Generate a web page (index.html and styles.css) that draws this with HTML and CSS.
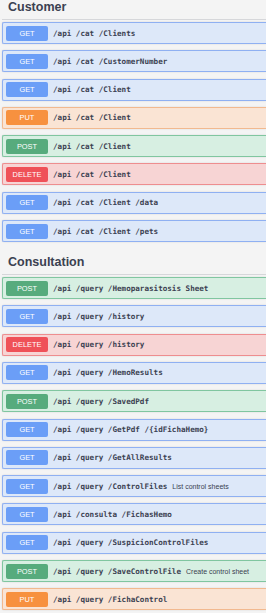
FILE: index.html
```html
<!DOCTYPE html>
<html lang="en">
<head>
    <meta charset="UTF-8">
    <meta name="viewport" content="width=device-width, initial-scale=1.0">
    <title>API</title>
    <link rel="stylesheet" href="styles.css">
</head>
<body>
    <div class="container">
        <div class="tag-section">
            <h3 class="tag-title">Customer</h3>
            <div class="op op-get"><span class="method">GET</span><span class="path">/api /cat /Clients</span></div>
            <div class="op op-get"><span class="method">GET</span><span class="path">/api /cat /CustomerNumber</span></div>
            <div class="op op-get"><span class="method">GET</span><span class="path">/api /cat /Client</span></div>
            <div class="op op-put"><span class="method">PUT</span><span class="path">/api /cat /Client</span></div>
            <div class="op op-post"><span class="method">POST</span><span class="path">/api /cat /Client</span></div>
            <div class="op op-delete"><span class="method">DELETE</span><span class="path">/api /cat /Client</span></div>
            <div class="op op-get"><span class="method">GET</span><span class="path">/api /cat /Client /data</span></div>
            <div class="op op-get"><span class="method">GET</span><span class="path">/api /cat /Client /pets</span></div>
        </div>

        <div class="tag-section">
            <h3 class="tag-title">Consultation</h3>
            <div class="op op-post"><span class="method">POST</span><span class="path">/api /query /Hemoparasitosis Sheet</span></div>
            <div class="op op-get"><span class="method">GET</span><span class="path">/api /query /history</span></div>
            <div class="op op-delete"><span class="method">DELETE</span><span class="path">/api /query /history</span></div>
            <div class="op op-get"><span class="method">GET</span><span class="path">/api /query /HemoResults</span></div>
            <div class="op op-post"><span class="method">POST</span><span class="path">/api /query /SavedPdf</span></div>
            <div class="op op-get"><span class="method">GET</span><span class="path">/api /query /GetPdf /{idFichaHemo}</span></div>
            <div class="op op-get"><span class="method">GET</span><span class="path">/api /query /GetAllResults</span></div>
            <div class="op op-get"><span class="method">GET</span><span class="path">/api /query /ControlFiles</span><span class="desc">List control sheets</span></div>
            <div class="op op-get"><span class="method">GET</span><span class="path">/api /consulta /FichasHemo</span></div>
            <div class="op op-get"><span class="method">GET</span><span class="path">/api /query /SuspicionControlFiles</span></div>
            <div class="op op-post"><span class="method">POST</span><span class="path">/api /query /SaveControlFile</span><span class="desc">Create control sheet</span></div>
            <div class="op op-put"><span class="method">PUT</span><span class="path">/api /query /FichaControl</span></div>
        </div>
    </div>
</body>
</html>
```

FILE: styles.css
```css
body {
    margin: 0;
    background-color: #f4f4f4;
    font-family: "Liberation Sans", Arial, sans-serif;
    color: #3b4151;
    overflow: hidden;
}

.container {
    padding-left: 2px;
}

.tag-title {
    margin: 0 0 2px 0;
    padding: 0 0 4px 6px;
    font-size: 12.5px;
    line-height: 15px;
    font-weight: bold;
    color: #3b4151;
    border-bottom: 1px solid #d6d7da;
}

.tag-section + .tag-section .tag-title {
    margin-top: 13px;
}

.op {
    display: flex;
    align-items: center;
    box-sizing: border-box;
    height: 22px;
    margin-bottom: 6.3px;
    padding-left: 3px;
    border: 1px solid;
    border-right-width: 0;
    border-radius: 2px 0 0 2px;
    box-shadow: 0 0 2px rgba(0, 0, 0, 0.12);
    overflow: hidden;
}

.method {
    width: 42px;
    height: 15px;
    line-height: 15px;
    text-align: center;
    color: white;
    font-size: 7.4px;
    border-radius: 2px;
    flex-shrink: 0;
}

.path {
    margin-left: 5px;
    font-family: "DejaVu Sans Mono", "Liberation Mono", monospace;
    font-weight: bold;
    font-size: 7.6px;
    color: #3b4151;
    white-space: nowrap;
}

.desc {
    margin-left: 5px;
    font-size: 7px;
    color: #3b4151;
    white-space: nowrap;
}

.op-get {
    background-color: #dde8f9;
    border-color: #8fb0f2;
}

.op-get .method {
    background-color: #6b9ef7;
}

.op-post {
    background-color: #d7efe2;
    border-color: #80c6a0;
}

.op-post .method {
    background-color: #57ab7d;
}

.op-put {
    background-color: #fae4d4;
    border-color: #f2b98f;
}

.op-put .method {
    background-color: #f7913f;
}

.op-delete {
    background-color: #f7d4d4;
    border-color: #ee8d8f;
}

.op-delete .method {
    background-color: #ef5158;
}
```
